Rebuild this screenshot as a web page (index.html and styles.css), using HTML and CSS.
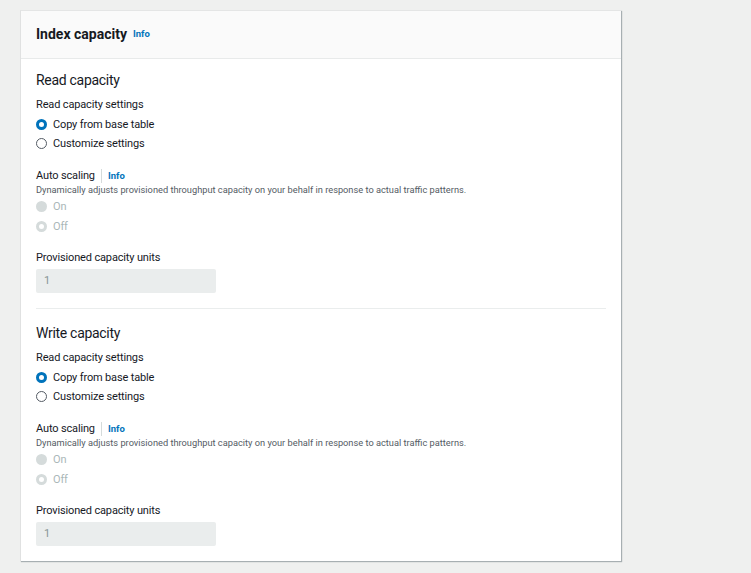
FILE: index.html
```html
<!DOCTYPE html>
<html>
<head>
<meta charset="utf-8">
<link rel="stylesheet" href="styles.css">
</head>
<body>
<div class="card">
  <div class="card-header">
    <h2 class="title">Index capacity</h2>
    <a class="info info-head">Info</a>
  </div>
  <div class="card-body">
    <section class="section">
      <h3 class="section-title">Read capacity</h3>
      <div class="label">Read capacity settings</div>
      <div class="radio-group">
        <div class="radio-row"><span class="radio checked"></span><span class="radio-label">Copy from base table</span></div>
        <div class="radio-row"><span class="radio"></span><span class="radio-label">Customize settings</span></div>
      </div>
      <div class="label-row"><span class="label">Auto scaling</span><span class="sep"></span><a class="info">Info</a></div>
      <div class="desc">Dynamically adjusts provisioned throughput capacity on your behalf in response to actual traffic patterns.</div>
      <div class="radio-group disabled">
        <div class="radio-row"><span class="radio dis"></span><span class="radio-label">On</span></div>
        <div class="radio-row"><span class="radio dis checked"></span><span class="radio-label">Off</span></div>
      </div>
      <div class="label field-label">Provisioned capacity units</div>
      <div class="input">1</div>
    </section>
    <div class="divider"></div>
    <section class="section">
      <h3 class="section-title">Write capacity</h3>
      <div class="label">Read capacity settings</div>
      <div class="radio-group">
        <div class="radio-row"><span class="radio checked"></span><span class="radio-label">Copy from base table</span></div>
        <div class="radio-row"><span class="radio"></span><span class="radio-label">Customize settings</span></div>
      </div>
      <div class="label-row"><span class="label">Auto scaling</span><span class="sep"></span><a class="info">Info</a></div>
      <div class="desc">Dynamically adjusts provisioned throughput capacity on your behalf in response to actual traffic patterns.</div>
      <div class="radio-group disabled">
        <div class="radio-row"><span class="radio dis"></span><span class="radio-label">On</span></div>
        <div class="radio-row"><span class="radio dis checked"></span><span class="radio-label">Off</span></div>
      </div>
      <div class="label field-label">Provisioned capacity units</div>
      <div class="input">1</div>
    </section>
  </div>
</div>
</body>
</html>
```

FILE: styles.css
```css
* { box-sizing: border-box; }
html, body { margin: 0; padding: 0; }
body {
  background: #eff0ef;
  font-family: Roboto, "Liberation Sans", Arial, sans-serif;
  color: #16191f;
  padding: 10px 0 0 20px;
  height: 573px;
  overflow: hidden;
}
.card {
  width: 601px;
  background: #fff;
  border-top: 1px solid #e4e5e5;
  border-left: 1px solid #e0e1e1;
  box-shadow: 1px 1px 1px 0 rgba(0, 28, 36, 0.3);
}
.card-header {
  height: 48px;
  background: #fafafa;
  border-bottom: 1px solid #e8eaea;
  display: flex;
  align-items: center;
  padding: 0 15px 2px 15px;
}
.title {
  margin: 0;
  font-size: 14px;
  font-weight: 700;
  line-height: 20px;
  color: #16191f;
}
.info {
  color: #0073bb;
  font-weight: 700;
  font-size: 9.5px;
  line-height: 14px;
  letter-spacing: 0;
}
.info-head { margin-left: 6px; margin-top: 1px; }
.card-body { padding: 11px 15px 15px 15px; }
.section-title {
  margin: 0;
  font-size: 14px;
  font-weight: 400;
  line-height: 20px;
  letter-spacing: -0.3px;
}
.label {
  font-size: 11px;
  line-height: 16px;
  margin-top: 7px;
  letter-spacing: -0.15px;
}
.radio-group { margin-top: 2px; }
.radio-row {
  display: flex;
  align-items: center;
  height: 19px;
  font-size: 11px;
  letter-spacing: -0.15px;
}
.disabled .radio-row { height: 20px; color: #aab7b8; }
.radio {
  width: 11px;
  height: 11px;
  border-radius: 50%;
  border: 1.3px solid #545b64;
  margin-right: 6px;
  flex: none;
}
.radio.checked { border: 3.5px solid #0073bb; background: #fff; }
.radio.dis { border: none; background: #d5dbdb; }
.radio.dis.checked { border: 3.5px solid #d5dbdb; background: #fff; }
.label-row {
  display: flex;
  align-items: center;
  margin-top: 15px;
  height: 16px;
}
.label-row .label { margin-top: 0; }
.sep {
  width: 1px;
  height: 14px;
  background: #d5dbdb;
  margin: 0 6px 0 6px;
}
.desc {
  font-size: 9.25px;
  line-height: 11px;
  color: #545b64;
}
.radio-group.disabled { margin-top: 1px; }
.field-label { margin-top: 14px; }
.input {
  margin-top: 3px;
  width: 180px;
  height: 24px;
  background: #eaeded;
  border-radius: 2px;
  color: #879596;
  font-size: 11px;
  line-height: 24px;
  padding-left: 8px;
}
.divider {
  height: 1px;
  background: #eaeded;
  margin: 15px 0 14px 0;
}
```
